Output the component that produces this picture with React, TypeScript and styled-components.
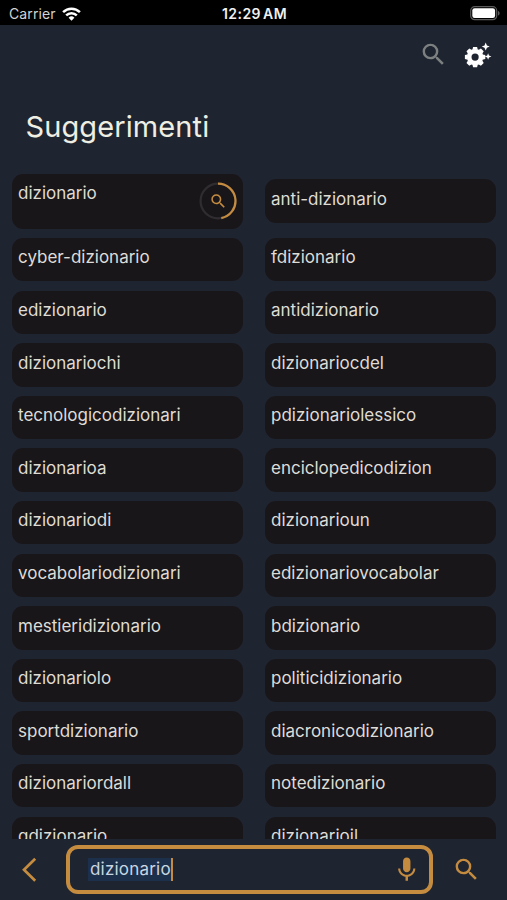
import React from "react";
import styled, { createGlobalStyle } from "styled-components";
import { MdMic, MdSearch } from "react-icons/md";

const GlobalStyle = createGlobalStyle`
  * { box-sizing: border-box; }
  html, body { margin: 0; background: #1f2530; }
  body { font-family: Inter, "Liberation Sans", sans-serif; overflow: hidden; }
`;

const amber = "#c58c40";

const Screen = styled.div`
  width: 507px;
  height: 900px;
  display: flex;
  flex-direction: column;
  background: #1f2530;
  color: #dfdcd5;
  overflow: hidden;
`;

const StatusBar = styled.header`
  flex: none;
  height: 25px;
  padding: 2px 7px 0 9px;
  display: grid;
  grid-template-columns: 1fr auto 1fr;
  align-items: center;
  background: #000;
`;

const Carrier = styled.div`
  display: flex;
  align-items: center;
  gap: 6px;
  font-size: 14px;
  letter-spacing: 0.1px;
  color: #d2d2d2;
`;

const Clock = styled.div`
  font-size: 14px;
  font-weight: 600;
  letter-spacing: 0.45px;
  word-spacing: -2px;
  color: #f0f0f0;
`;

const Battery = styled.svg`
  justify-self: end;
  display: block;
`;

const Toolbar = styled.div`
  flex: none;
  height: 61px;
  padding: 15px 15px 0 0;
  display: flex;
  justify-content: flex-end;
  gap: 15px;
`;

const ToolButton = styled.button<{ $color: string }>`
  width: 29px;
  height: 29px;
  padding: 0;
  border: 0;
  background: none;
  color: ${(p) => p.$color};
  svg { display: block; }
`;

const Title = styled.h1`
  flex: none;
  height: 87.5px;
  margin: 0;
  padding: 23px 0 0 25.5px;
  font-size: 29px;
  line-height: 36px;
  font-weight: 400;
  letter-spacing: 0.1px;
  color: #efeee2;
`;

const Suggestions = styled.main`
  flex: 1;
  min-height: 0;
  overflow: hidden;
  padding: 0 11px 0 12px;
  display: grid;
  grid-template-columns: 231px 231px;
  column-gap: 22px;
  row-gap: 9.25px;
  grid-template-rows: 55.3px;
  grid-auto-rows: 43.35px;
  align-items: center;
`;

const Card = styled.div<{ $tall?: boolean }>`
  height: ${(p) => (p.$tall ? "55.3px" : "43.35px")};
  padding: 9.3px 6px 0;
  display: flex;
  justify-content: space-between;
  align-items: flex-start;
  border-radius: 11px;
  background: #19161a;
  font-size: 17px;
  line-height: 21px;
  white-space: nowrap;
`;

const Ring = styled.div`
  width: 38px;
  height: 38px;
  margin-top: -1px;
  display: grid;
  place-items: center;
  color: ${amber};
  > * { grid-area: 1 / 1; }
`;

const BottomBar = styled.footer`
  flex: none;
  height: 61px;
  padding: 6px 26px 6px 21px;
  display: flex;
  align-items: center;
`;

const BackButton = styled.button`
  width: 17px;
  height: 26px;
  margin-right: 28px;
  padding: 0;
  border: 0;
  background: none;
  svg { display: block; }
`;

const SearchField = styled.div`
  width: 367px;
  height: 49px;
  padding: 0 8px 0 18px;
  display: flex;
  align-items: center;
  justify-content: space-between;
  border: 4px solid ${amber};
  border-radius: 12px;
  color: ${amber};
`;

const Entry = styled.span`
  height: 23px;
  margin-bottom: 1px;
  padding-left: 2px;
  border-right: 2px solid ${amber};
  background: #1c304b;
  color: #cad5e0;
  font-size: 17px;
  letter-spacing: 0.2px;
  line-height: 23px;
`;

const SubmitButton = styled(ToolButton)`
  margin-left: 19px;
`;

const rows: [string, string][] = [
  ["dizionario", "anti-dizionario"],
  ["cyber-dizionario", "fdizionario"],
  ["edizionario", "antidizionario"],
  ["dizionariochi", "dizionariocdel"],
  ["tecnologicodizionari", "pdizionariolessico"],
  ["dizionarioa", "enciclopedicodizion"],
  ["dizionariodi", "dizionarioun"],
  ["vocabolariodizionari", "edizionariovocabolar"],
  ["mestieridizionario", "bdizionario"],
  ["dizionariolo", "politicidizionario"],
  ["sportdizionario", "diacronicodizionario"],
  ["dizionariordall", "notedizionario"],
  ["gdizionario", "dizionarioil"],
];

function WifiIcon() {
  return (
    <svg width="19" height="14" viewBox="0 0 19 14" fill="none" stroke="#fff" strokeWidth="2.5">
      <path d="M1.1 5.1a12 12 0 0 1 16.8 0" />
      <path d="M4.2 8.4a7.5 7.5 0 0 1 10.6 0" />
      <path d="M6.6 10.8a4.1 4.1 0 0 1 5.8 0L9.5 13.8z" fill="#fff" stroke="none" />
    </svg>
  );
}

function BatteryIcon() {
  return (
    <Battery width="30" height="15" viewBox="0 0 30 15">
      <rect x="0.7" y="0.7" width="26" height="13" rx="4" fill="none" stroke="#5b5b5b" strokeWidth="1.2" />
      <rect x="2.3" y="2.3" width="22.8" height="9.8" rx="2.3" fill="#fff" />
      <path d="M28 5v4.6c1-.4 1.6-1.2 1.6-2.3S29 5.4 28 5z" fill="#5b5b5b" />
    </Battery>
  );
}

function GearSparkleIcon() {
  return (
    <svg width="29" height="29" viewBox="0 0 29 29">
      <g transform="translate(12.1 17.1)">
        <circle r="5.9" fill="none" stroke="#fff" strokeWidth="4.6" />
        {[0, 45, 90, 135].map((angle) => (
          <path
            key={angle}
            transform={`rotate(${angle})`}
            d="M-2.7 -7.4L-2 -10.2H2L2.7 -7.4zM-2.7 7.4L-2 10.2H2L2.7 7.4z"
            fill="#fff"
          />
        ))}
      </g>
      <path d="M22.7 2.6l1.2 2.8 2.8 1.2-2.8 1.2-1.2 2.8-1.2-2.8-2.8-1.2 2.8-1.2z" fill="#fff" />
      <path d="M25.1 13.2l.9 2.4 2.4.9-2.4.9-.9 2.4-.9-2.4-2.4-.9 2.4-.9z" fill="#fff" />
    </svg>
  );
}

function SearchProgress() {
  return (
    <Ring>
      <svg width="38" height="38" viewBox="0 0 38 38" fill="none" strokeWidth="2.2">
        <circle cx="19" cy="19" r="17.4" stroke="#302d31" />
        <path d="M19 1.6A17.4 17.4 0 0 1 22.3 36.1" stroke={amber} />
      </svg>
      <MdSearch size={18.5} />
    </Ring>
  );
}

export default function App() {
  return (
    <>
      <GlobalStyle />
      <Screen>
        <StatusBar>
          <Carrier>
            Carrier
            <WifiIcon />
          </Carrier>
          <Clock>12:29 AM</Clock>
          <BatteryIcon />
        </StatusBar>
        <Toolbar>
          <ToolButton $color="#7d8080" aria-label="Cerca"><MdSearch size={29} /></ToolButton>
          <ToolButton $color="#fff" aria-label="Impostazioni"><GearSparkleIcon /></ToolButton>
        </Toolbar>
        <Title>Suggerimenti</Title>
        <Suggestions>
          {rows.map(([left, right], i) => (
            <React.Fragment key={left}>
              <Card $tall={i === 0}>
                {left}
                {i === 0 && <SearchProgress />}
              </Card>
              <Card>{right}</Card>
            </React.Fragment>
          ))}
        </Suggestions>
        <BottomBar>
          <BackButton aria-label="Indietro">
            <svg width="17" height="26" viewBox="0 0 17 26" fill="none" stroke={amber} strokeWidth="2.7">
              <path d="M14.2 1.8L3 12.8l11.2 11" />
            </svg>
          </BackButton>
          <SearchField>
            <Entry>dizionario</Entry>
            <MdMic size={29.5} />
          </SearchField>
          <SubmitButton $color={amber} aria-label="Avvia ricerca"><MdSearch size={29} /></SubmitButton>
        </BottomBar>
      </Screen>
    </>
  );
}
